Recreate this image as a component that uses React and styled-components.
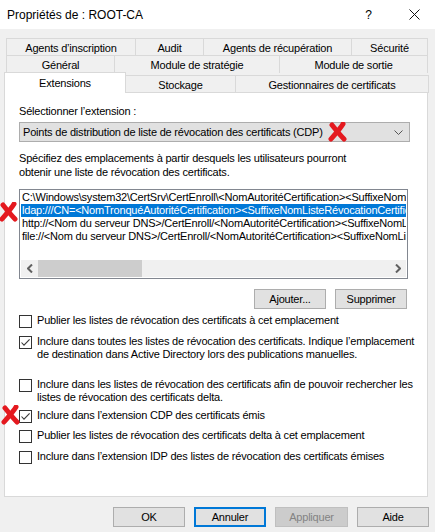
import styled, { createGlobalStyle } from 'styled-components';

const GlobalStyle = createGlobalStyle`
	html, body {
		margin: 0;
		padding: 0;
		background: #f0f0f0;
	}
	* {
		box-sizing: border-box;
	}
`;

const font = `"Liberation Sans", Arial, sans-serif`;

const tabRows = [
	[['Agents d’inscription', 130], ['Audit', 69], ['Agents de récupération', 149], ['Sécurité', 77]],
	[['Général', 109], ['Module de stratégie', 166], ['Module de sortie', 149]],
];

const lastRow = [
	['Extensions', 122, true],
	['Stockage', 111, false],
	['Gestionnaires de certificats', 194, false],
];

const locations = [
	'C:\\Windows\\system32\\CertSrv\\CertEnroll\\<NomAutoritéCertification><SuffixeNomListeRévocationCertificats><DeltaListeRévocationCertificatsAutorisée>.crl',
	'ldap:///CN=<NomTronquéAutoritéCertification><SuffixeNomListeRévocationCertificats>,CN=<NomServeurCourt>,CN=CDP',
	'http://<Nom du serveur DNS>/CertEnroll/<NomAutoritéCertification><SuffixeNomListeRévocationCertificats>.crl',
	'file://<Nom du serveur DNS>/CertEnroll/<NomAutoritéCertification><SuffixeNomListeRévocationCertificats>.crl',
];

const options = [
	{ mt: 5, checked: false, text: 'Publier les listes de révocation des certificats à cet emplacement' },
	{ mt: 7, checked: true, text: 'Inclure dans toutes les listes de révocation des certificats. Indique l’emplacement de destination dans Active Directory lors des publications manuelles.' },
	{ mt: 17, checked: false, text: 'Inclure dans les listes de révocation des certificats afin de pouvoir rechercher les listes de révocation des certificats delta.' },
	{ mt: 5, checked: true, text: 'Inclure dans l’extension CDP des certificats émis' },
	{ mt: 6, checked: false, text: 'Publier les listes de révocation des certificats delta à cet emplacement' },
	{ mt: 7, checked: false, text: 'Inclure dans l’extension IDP des listes de révocation des certificats émises' },
];

function RedMark({ x, y }) {
	return (
		<Mark style={{ left: x, top: y }} width="20" height="20" viewBox="0 0 20 20">
			<path d="M4 3 C8 8, 12 13, 16 17" stroke="#e4191f" strokeWidth="5" strokeLinecap="round" fill="none" />
			<path d="M15 2 C12 7, 8 11, 3 17" stroke="#e4191f" strokeWidth="5" strokeLinecap="round" fill="none" />
		</Mark>
	);
}

function CheckBox({ checked }) {
	return (
		<Box>
			{checked && (
				<svg width="11" height="11" viewBox="0 0 11 11">
					<path d="M1.5 5.5 L4 8.2 L9.6 2.3" stroke="#3a3a3a" strokeWidth="1.1" fill="none" />
				</svg>
			)}
		</Box>
	);
}

export default function App() {
	return (
		<>
			<GlobalStyle />
			<Window>
				<TitleBar>
					<Title>Propriétés de : ROOT-CA</Title>
					<Help>?</Help>
					<svg width="11" height="11" viewBox="0 0 11 11">
						<path d="M0.5 0.5 L10.5 10.5 M10.5 0.5 L0.5 10.5" stroke="#111" strokeWidth="1" />
					</svg>
				</TitleBar>

				<Tabs>
					{tabRows.map((row, i) => (
						<TabRow key={i} $indent={2}>
							{row.map(([label, w]) => (
								<Tab key={label} $w={w}>{label}</Tab>
							))}
						</TabRow>
					))}
					<TabRow $indent={0} $last>
						{lastRow.map(([label, w, active]) => (
							<Tab key={label} $w={w} $active={active} $low={!active}>{label}</Tab>
						))}
					</TabRow>
				</Tabs>

				<Panel>
					<Label>Sélectionner l’extension :</Label>
					<Select>
						<span>Points de distribution de liste de révocation des certificats (CDP)</span>
						<svg width="9" height="5" viewBox="0 0 9 5">
							<path d="M0.5 0.5 L4.5 4.5 L8.5 0.5" stroke="#555" strokeWidth="1" fill="none" />
						</svg>
					</Select>
					<Description>
						Spécifiez des emplacements à partir desquels les utilisateurs pourront
						<br />
						obtenir une liste de révocation des certificats.
					</Description>

					<ListBox>
						<Items>
							{locations.map((loc, i) => (
								<Item key={i} $selected={i === 1}>{loc}</Item>
							))}
						</Items>
						<ScrollBar>
							<Arrow>
								<svg width="6" height="9" viewBox="0 0 6 9">
									<path d="M5 0.5 L1 4.5 L5 8.5" stroke="#606060" strokeWidth="2" fill="none" />
								</svg>
							</Arrow>
							<Track>
								<Thumb />
							</Track>
							<Arrow>
								<svg width="6" height="9" viewBox="0 0 6 9">
									<path d="M1 0.5 L5 4.5 L1 8.5" stroke="#606060" strokeWidth="2" fill="none" />
								</svg>
							</Arrow>
						</ScrollBar>
					</ListBox>

					<ListActions>
						<Button $w={72}>Ajouter...</Button>
						<Button $w={72}>Supprimer</Button>
					</ListActions>

					{options.map((opt, i) => (
						<Option key={i} $mt={opt.mt}>
							<CheckBox checked={opt.checked} />
							<OptionText>{opt.text}</OptionText>
						</Option>
					))}
				</Panel>

				<Footer>
					<Button $w={72}>OK</Button>
					<Button $w={72} $default>Annuler</Button>
					<Button $w={73} $disabled>Appliquer</Button>
					<Button $w={72}>Aide</Button>
				</Footer>

				<RedMark x={328} y={122} />
				<RedMark x={-1} y={202} />
				<RedMark x={1} y={405} />
			</Window>
		</>
	);
}

const Window = styled.div`
	position: relative;
	width: 435px;
	height: 532px;
	overflow: hidden;
	background: #f0f0f0;
	font-family: ${font};
	font-size: 11px;
	letter-spacing: -0.2px;
	color: #000;
	display: flex;
	flex-direction: column;
`;

const TitleBar = styled.div`
	height: 29px;
	background: #fff;
	display: flex;
	align-items: center;
	padding: 0 15px 0 7px;
	flex-shrink: 0;
	letter-spacing: 0;
`;

const Title = styled.div`
	flex: 1;
	font-size: 12px;
`;

const Help = styled.div`
	font-size: 12px;
	margin-right: 37px;
`;

const Tabs = styled.div`
	margin-top: 9px;
	padding-left: 4px;
	display: flex;
	flex-direction: column;
`;

const TabRow = styled.div`
	display: flex;
	height: ${(p) => (p.$last ? 20 : 17)}px;
	margin-left: ${(p) => p.$indent}px;
	align-items: flex-start;
`;

const Tab = styled.div`
	width: ${(p) => p.$w}px;
	height: ${(p) => (p.$active ? 21 : 18)}px;
	margin-top: ${(p) => (p.$low ? 3 : 0)}px;
	margin-left: -1px;
	&:first-child {
		margin-left: 0;
	}
	border: 1px solid #d9d9d9;
	border-bottom: none;
	background: ${(p) => (p.$active ? '#fff' : '#f0f0f0')};
	position: relative;
	z-index: ${(p) => (p.$active ? 2 : 0)};
	display: flex;
	align-items: center;
	justify-content: center;
	padding-top: ${(p) => (p.$active ? 0 : 1)}px;
	white-space: nowrap;
`;

const Panel = styled.div`
	margin: 0 7px 0 4px;
	height: 405px;
	background: #fff;
	border: 1px solid #d9d9d9;
	padding: 12px 10px 0 14px;
	display: flex;
	flex-direction: column;
	position: relative;
	z-index: 1;
`;

const Label = styled.div`
	line-height: 13px;
`;

const Select = styled.div`
	margin: 4px 7px 0 0;
	height: 20px;
	background: #e1e1e1;
	border: 1px solid #adadad;
	display: flex;
	align-items: center;
	justify-content: space-between;
	padding: 0 6px 0 3px;
	white-space: nowrap;
`;

const Description = styled.div`
	margin-top: 9px;
	line-height: 14px;
`;

const ListBox = styled.div`
	margin: 10px 9px 0 0;
	height: 90px;
	border: 1px solid #828790;
	padding: 1px;
	display: flex;
	flex-direction: column;
`;

const Items = styled.div`
	flex: 1;
	overflow: hidden;
`;

const Item = styled.div`
	height: 13px;
	line-height: 13px;
	white-space: nowrap;
	padding-left: 1px;
	background: ${(p) => (p.$selected ? '#0078d7' : 'transparent')};
	color: ${(p) => (p.$selected ? '#fff' : '#000')};
`;

const ScrollBar = styled.div`
	height: 17px;
	display: flex;
	background: #f0f0f0;
`;

const Arrow = styled.div`
	width: 17px;
	display: flex;
	align-items: center;
	justify-content: center;
`;

const Track = styled.div`
	flex: 1;
	display: flex;
	align-items: stretch;
`;

const Thumb = styled.div`
	width: 104px;
	background: #cdcdcd;
`;

const ListActions = styled.div`
	margin-top: 10px;
	display: flex;
	justify-content: flex-end;
	gap: 9px;
	padding-right: 10px;
`;

const Button = styled.div`
	width: ${(p) => p.$w}px;
	height: 20px;
	display: flex;
	align-items: center;
	justify-content: center;
	background: ${(p) => (p.$disabled ? '#cccccc' : '#e1e1e1')};
	border: ${(p) => (p.$default ? '2px solid #0078d7' : p.$disabled ? '1px solid #bfbfbf' : '1px solid #adadad')};
	color: ${(p) => (p.$disabled ? '#838383' : '#000')};
`;

const Option = styled.div`
	margin-top: ${(p) => p.$mt}px;
	display: flex;
	align-items: flex-start;
	gap: 5px;
`;

const Box = styled.div`
	flex-shrink: 0;
	width: 13px;
	height: 13px;
	margin-top: 1px;
	border: 1px solid #333;
	background: #fff;
	display: flex;
	align-items: center;
	justify-content: center;
`;

const OptionText = styled.div`
	line-height: 13px;
`;

const Footer = styled.div`
	margin-top: 10px;
	display: flex;
	justify-content: flex-end;
	gap: 9px;
	padding-right: 6px;
`;

const Mark = styled.svg`
	position: absolute;
	z-index: 5;
`;
